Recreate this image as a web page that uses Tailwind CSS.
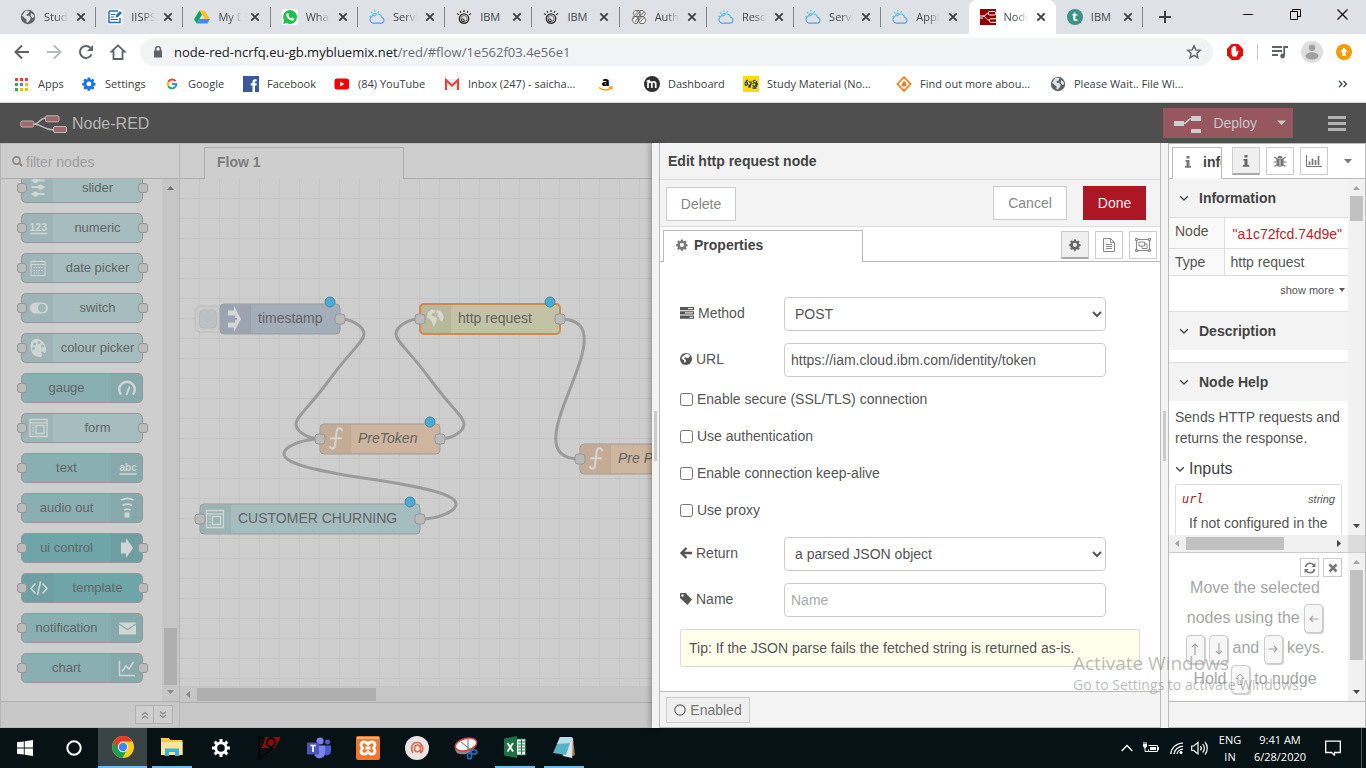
<!DOCTYPE html>
<html lang="en">
<head>
<meta charset="utf-8">
<title>Node-RED : node-red-ncrfq.eu-gb.mybluemix.net</title>
<script src="https://cdn.jsdelivr.net/npm/@tailwindcss/browser@4"></script>
</head>
<body class="flex h-screen flex-col overflow-hidden bg-white font-['Liberation_Sans',Arial,sans-serif] text-[14px] leading-5 text-[#555]">

<svg class="absolute size-0" aria-hidden="true">
  <defs>
    <linearGradient id="cloudGrad" x1="0" y1="0" x2="0" y2="16" gradientUnits="userSpaceOnUse"><stop offset="0" stop-color="#63dcd8"/><stop offset="1" stop-color="#5b8ff0"/></linearGradient>
    <symbol id="i-close" viewBox="0 0 10 10"><path d="M1.300 1.300 8.700 8.700M8.700 1.300 1.300 8.700" stroke="#3c4043" stroke-width="1.800" fill="none"/></symbol>
    <symbol id="i-cloud" viewBox="0 0 16 16"><path d="M4 14.200h8.200a3 3 0 0 0 .5-5.900 3.800 3.800 0 0 0-6.900-1.600A3.600 3.600 0 0 0 4 14.200zM3.600 6.600A2.700 2.700 0 0 1 7 4.400M1 7.400l1 .2M2.200 3.200l.9.9M5.800 1v1.300M9.600 2.400 8.900 3.500" fill="none" stroke="url(#cloudGrad)" stroke-width="1.200" stroke-linecap="round"/></symbol>
    <symbol id="i-watson" viewBox="0 0 16 16"><circle cx="8" cy="9.600" r="4.700" fill="none" stroke="#333" stroke-width="1.400"/><circle cx="8" cy="9.600" r="3.100" fill="none" stroke="#555" stroke-width=".8"/><circle cx="6.800" cy="11.300" r="1.400" fill="none" stroke="#222"/><path d="M8 1v2M4 2l1 1.800M12 2l-1 1.800M1 4.600l1.900 1.200M15 4.600l-1.900 1.200" stroke="#333" stroke-width="1.200"/></symbol>
    <symbol id="i-globe" viewBox="0 0 16 16"><circle cx="8" cy="8" r="7.200" fill="#5f6368"/><path d="M5.500 1.500 9.500 2 8.600 4.400 6.500 5.200 6.800 6.800H9l1.600 1.700-.4 2.200-2.400 2.800-1.400-.4.2-2.600-2.400-1.700L3 7.300 1.900 7zM11 4l2.600 1.800.6 2-1.400 1.500L10.700 7z" fill="#dfe2e6"/></symbol>
    <symbol id="i-gear" viewBox="0 0 16 16"><path fill-rule="evenodd" fill="currentColor" d="M6.600 1h2.800l.4 2 1.100.5 1.700-1.200 2 2-1.200 1.700.5 1.100 2 .4v2.800l-2 .4-.5 1.100 1.200 1.700-2 2-1.700-1.200-1.100.5-.4 2H6.600l-.4-2-1.100-.5-1.700 1.200-2-2 1.200-1.700-.5-1.100-2-.4V7.400l2-.4.5-1.100L1.400 4.200l2-2 1.700 1.200L6.200 3zM8 5.600a2.900 2.900 0 1 0 0 5.800 2.900 2.900 0 0 0 0-5.800z" transform="translate(.2 -.3) scale(.96)"/></symbol>
    <symbol id="i-chev" viewBox="0 0 10 10"><path d="M1.200 3.200 5 7l3.800-3.800" fill="none" stroke="currentColor" stroke-width="1.300"/></symbol>
    <symbol id="i-form" viewBox="0 0 20 20"><path d="M1.500 1.500h17v17h-17zM1.500 4.800h17M7.500 7.500h8v8h-8z" fill="none" stroke="#d0d5d5" stroke-width="1.300"/><path d="M3.500 7h2.500M3.500 10h2.500M3.500 13h2.500M3.500 16h2.500" stroke="#d0d5d5" stroke-width="1.200"/></symbol>
    <symbol id="i-func" viewBox="0 0 16 26"><path d="M14 4.200c-.6-2.800-4.700-2.700-5.300.8L7 19.500c-.6 3.800-4.600 3.900-5 1.300M3 12.200h10" fill="none" stroke="#d6d4d2" stroke-width="2.100" stroke-linecap="round"/></symbol>
    <pattern id="grid" width="20" height="20" patternUnits="userSpaceOnUse"><path d="M19.500 0V20M0 19.500H20" stroke="#c5c5c5" fill="none"/></pattern>
  </defs>
</svg>

<!-- Browser tab strip -->
<header class="flex h-[34px] shrink-0 items-stretch bg-[#dee1e6] font-['Segoe_UI','Open_Sans',sans-serif] text-[11px] leading-4 text-[#46494d]">
  <nav class="ml-[9px] flex w-[1134px] items-stretch" aria-label="Tabs">
    <div class="flex flex-1 items-center pl-[11px]"><svg class="size-4 shrink-0"><use href="#i-globe"/></svg><span class="ml-2 w-6 overflow-hidden whitespace-nowrap [mask-image:linear-gradient(to_right,#000_50%,transparent)]">Stud</span><button class="ml-2" aria-label="Close"><svg class="size-[10px]"><use href="#i-close"/></svg></button><i class="ml-auto h-5 w-px bg-[#80868b]"></i></div>
    <div class="flex flex-1 items-center pl-[11px]"><svg class="size-4 shrink-0" viewBox="0 0 16 16"><rect x=".5" y=".5" width="15" height="15" rx="1" fill="#fff"/><path d="M11 2H3a1 1 0 0 0-1 1v10.500h11V9" fill="none" stroke="#2a6db5" stroke-width="1.500"/><path d="M4 5.500h4M4 8h3M4 10.500h7" stroke="#2a6db5"/><path d="m8.500 8.500.5-2.500L13 2l2 2-4 4z" fill="#2a6db5"/></svg><span class="ml-2 w-6 overflow-hidden whitespace-nowrap [mask-image:linear-gradient(to_right,#000_50%,transparent)]">IISPS</span><button class="ml-2" aria-label="Close"><svg class="size-[10px]"><use href="#i-close"/></svg></button><i class="ml-auto h-5 w-px bg-[#80868b]"></i></div>
    <div class="flex flex-1 items-center pl-[11px]"><svg class="size-4 shrink-0" viewBox="0 0 16 16"><path d="M5.500 1.500h5L16 10h-5.200z" fill="#fbc22d"/><path d="M5.500 1.500 8 5.800 2.700 14.500 0 10.200z" fill="#11a25e"/><path d="M5.500 10H16l-2.700 4.500H2.700z" fill="#4687f3"/></svg><span class="ml-2 w-6 overflow-hidden whitespace-nowrap [mask-image:linear-gradient(to_right,#000_50%,transparent)]">My Drive</span><button class="ml-2" aria-label="Close"><svg class="size-[10px]"><use href="#i-close"/></svg></button><i class="ml-auto h-5 w-px bg-[#80868b]"></i></div>
    <div class="flex flex-1 items-center pl-[11px]"><svg class="size-4 shrink-0" viewBox="0 0 16 16"><rect width="16" height="16" rx="2" fill="#fff"/><path d="M8 1a7 7 0 0 1 0 14 7 7 0 0 1-3.300-.9L1 15l1-3.600A7 7 0 0 1 8 1z" fill="#21bf4b"/><path d="M5.300 4.300c.6-.6 1.200-.2 1.700 1.300.2.500-.6.800-.5 1.200.6 1.300 1.500 2 2.700 2.600.5.100.8-1 1.300-.8 1.500.7 1.900.9 1.600 1.700-.5 1.300-2 1.500-3.400.9C6.300 10.300 4.900 8.700 4.400 6.700c-.2-.9.2-1.900.9-2.400z" fill="#fff"/></svg><span class="ml-2 w-6 overflow-hidden whitespace-nowrap [mask-image:linear-gradient(to_right,#000_50%,transparent)]">WhatsApp</span><button class="ml-2" aria-label="Close"><svg class="size-[10px]"><use href="#i-close"/></svg></button><i class="ml-auto h-5 w-px bg-[#80868b]"></i></div>
    <div class="flex flex-1 items-center pl-[11px]"><svg class="size-4 shrink-0"><use href="#i-cloud"/></svg><span class="ml-2 w-6 overflow-hidden whitespace-nowrap [mask-image:linear-gradient(to_right,#000_50%,transparent)]">Service</span><button class="ml-2" aria-label="Close"><svg class="size-[10px]"><use href="#i-close"/></svg></button><i class="ml-auto h-5 w-px bg-[#80868b]"></i></div>
    <div class="flex flex-1 items-center pl-[11px]"><svg class="size-4 shrink-0"><use href="#i-watson"/></svg><span class="ml-2 w-6 overflow-hidden whitespace-nowrap">IBM</span><button class="ml-2" aria-label="Close"><svg class="size-[10px]"><use href="#i-close"/></svg></button><i class="ml-auto h-5 w-px bg-[#80868b]"></i></div>
    <div class="flex flex-1 items-center pl-[11px]"><svg class="size-4 shrink-0"><use href="#i-watson"/></svg><span class="ml-2 w-6 overflow-hidden whitespace-nowrap">IBM</span><button class="ml-2" aria-label="Close"><svg class="size-[10px]"><use href="#i-close"/></svg></button><i class="ml-auto h-5 w-px bg-[#80868b]"></i></div>
    <div class="flex flex-1 items-center pl-[11px]"><svg class="size-4 shrink-0" viewBox="0 0 16 16" fill="#f3f3f3" stroke="#5c6064" stroke-width=".9"><path d="M4 1.500h4l2 3-2 3H4l-2-3zM9 1.500h3l2.500 3-2 3H10l-2-3zM2.500 7.500h3l2.500 3.500-2 3.500H3.500L1 11zM8.500 7.500h4L15 11l-2 3.500H9L7 11z"/><path d="m4 6 3-4M5.500 7 9 2M10 6.500 13 3M4 13l3.500-5M9 13.500 13.500 8M2 10l2-2.500M6 14l5-7"/></svg><span class="ml-2 w-6 overflow-hidden whitespace-nowrap [mask-image:linear-gradient(to_right,#000_50%,transparent)]">Authen</span><button class="ml-2" aria-label="Close"><svg class="size-[10px]"><use href="#i-close"/></svg></button><i class="ml-auto h-5 w-px bg-[#80868b]"></i></div>
    <div class="flex flex-1 items-center pl-[11px]"><svg class="size-4 shrink-0"><use href="#i-cloud"/></svg><span class="ml-2 w-6 overflow-hidden whitespace-nowrap [mask-image:linear-gradient(to_right,#000_50%,transparent)]">Resource</span><button class="ml-2" aria-label="Close"><svg class="size-[10px]"><use href="#i-close"/></svg></button><i class="ml-auto h-5 w-px bg-[#80868b]"></i></div>
    <div class="flex flex-1 items-center pl-[11px]"><svg class="size-4 shrink-0"><use href="#i-cloud"/></svg><span class="ml-2 w-6 overflow-hidden whitespace-nowrap [mask-image:linear-gradient(to_right,#000_50%,transparent)]">Service</span><button class="ml-2" aria-label="Close"><svg class="size-[10px]"><use href="#i-close"/></svg></button><i class="ml-auto h-5 w-px bg-[#80868b]"></i></div>
    <div class="flex flex-1 items-center pl-[11px]"><svg class="size-4 shrink-0"><use href="#i-cloud"/></svg><span class="ml-2 w-6 overflow-hidden whitespace-nowrap [mask-image:linear-gradient(to_right,#000_50%,transparent)]">Application</span><button class="ml-2" aria-label="Close"><svg class="size-[10px]"><use href="#i-close"/></svg></button></div>
    <div class="flex flex-1 items-center rounded-t-lg bg-white pl-[11px]"><svg class="size-4 shrink-0" viewBox="0 0 16 16"><rect width="16" height="16" fill="#8f0000"/><path d="M0 7h3c3 0 3-3 6-3M3 7c3 0 3 4.500 7 4.500M0 9h3" stroke="#fff" fill="none"/><rect x="8.500" y="2.500" width="7" height="3.500" rx="1" fill="#8f0000" stroke="#fff"/><rect x="9.500" y="9.800" width="8" height="3.500" rx="1" fill="#8f0000" stroke="#fff"/></svg><span class="ml-2 w-6 overflow-hidden whitespace-nowrap [mask-image:linear-gradient(to_right,#000_50%,transparent)]">Node-RED</span><button class="ml-2" aria-label="Close"><svg class="size-[10px]"><use href="#i-close"/></svg></button></div>
    <div class="flex flex-1 items-center pl-[11px]"><b class="flex size-4 shrink-0 items-center justify-center rounded-full bg-[#3d9287] pb-0.5 text-[13px] leading-4 text-white">t</b><span class="ml-2 w-6 overflow-hidden whitespace-nowrap">IBM</span><button class="ml-2" aria-label="Close"><svg class="size-[10px]"><use href="#i-close"/></svg></button><i class="ml-auto h-5 w-px bg-[#80868b]"></i></div>
  </nav>
  <button class="ml-4" aria-label="New tab"><svg class="size-3" viewBox="0 0 12 12"><path d="M6 0v12M0 6h12" stroke="#3c4043" stroke-width="2"/></svg></button>
  <div class="ml-auto flex items-start gap-9 pt-[9px] pr-[18px] text-black">
    <button aria-label="Minimize"><svg class="size-[11px]" viewBox="0 0 11 11"><path d="M0 5.500h10" stroke="currentColor"/></svg></button>
    <button aria-label="Restore"><svg class="size-[11px]" viewBox="0 0 11 11"><path d="M.5 2.500h7v8h-7zM2.500 2.500v-2h8v7h-3" fill="none" stroke="currentColor"/></svg></button>
    <button aria-label="Close window"><svg class="size-[11px]" viewBox="0 0 11 11"><path d="m.5.5 10 10M10.500.5l-10 10" stroke="currentColor" stroke-width="1.200"/></svg></button>
  </div>
</header>

<!-- Address bar -->
<div class="flex h-9 shrink-0 items-center pr-3.5 pl-3.5 font-['Segoe_UI','Open_Sans',sans-serif]">
  <div class="flex w-[126px] shrink-0 items-center gap-4 text-[#5f6368]">
    <button aria-label="Back"><svg class="size-4" viewBox="0 0 16 16"><path d="M15 8H2M8 1.500 1.500 8 8 14.500" fill="none" stroke="currentColor" stroke-width="2"/></svg></button>
    <button aria-label="Forward" class="text-[#b8babd]"><svg class="size-4" viewBox="0 0 16 16"><path d="M1 8h13M8 1.500 14.500 8 8 14.500" fill="none" stroke="currentColor" stroke-width="2"/></svg></button>
    <button aria-label="Reload"><svg class="size-4" viewBox="0 0 16 16"><path d="M13.500 10.300A6 6 0 1 1 12.300 3.800" fill="none" stroke="currentColor" stroke-width="2"/><path d="M15 1v6H9z" fill="currentColor"/></svg></button>
    <button aria-label="Home"><svg class="size-4" viewBox="0 0 16 16"><path d="M8 1.400 1.500 7.500H3.500V15h9V7.500h2z" fill="none" stroke="currentColor" stroke-width="1.800"/></svg></button>
  </div>
  <div class="flex h-7 grow items-center rounded-full bg-[#f1f3f4] pr-[11px] pl-3.5">
    <svg class="mr-3 h-3 w-2 shrink-0" viewBox="0 0 8 12"><path d="M0 4.500h8V11.500H0z" fill="#5f6368"/><path d="M1.700 5V2.800a2.300 2.300 0 0 1 4.600 0V5" fill="none" stroke="#5f6368" stroke-width="1.400"/></svg>
    <div class="grow text-[13px] text-[#202124]">node-red-ncrfq.eu-gb.mybluemix.net<span class="text-[#6a6e73]">/red/#flow/1e562f03.4e56e1</span></div>
    <button aria-label="Bookmark"><svg class="size-4" viewBox="0 0 16 16"><path d="m8 1.800 1.800 4.100 4.500.4-3.400 3 1 4.400L8 11.400l-3.900 2.300 1-4.400-3.400-3 4.500-.4z" fill="none" stroke="#5f6368" stroke-width="1.400"/></svg></button>
  </div>
  <button class="ml-3.5" aria-label="AdBlock"><svg class="size-4" viewBox="0 0 16 16"><path d="M4.700 0h6.600L16 4.700v6.600L11.300 16H4.700L0 11.300V4.700z" fill="#e40d0d"/><path d="M4.500 8V4.200c0-.8 1-.8 1 0V3c0-.9 1.200-.9 1.200 0v-.6c0-.9 1.300-.9 1.300 0V3c0-.9 1.200-.9 1.200 0v5l1.300-1.200c.7-.5 1.500.2 1 1L9.700 12.500H5.800C4.900 11.500 4.500 10 4.500 8z" fill="#fff"/></svg></button>
  <i class="ml-3.5 h-4 w-px bg-[#c8cacd]"></i>
  <button class="ml-3.5" aria-label="Media"><svg class="h-3.5 w-4" viewBox="0 0 16 14"><path d="M0 2h10M0 6h10M0 10h6" stroke="#5f6368" stroke-width="1.800"/><path d="M12.200 11V2H16" fill="none" stroke="#5f6368" stroke-width="1.800"/><circle cx="10.600" cy="11" r="2.400" fill="#5f6368"/></svg></button>
  <button class="ml-[13px]" aria-label="Profile"><svg class="size-[22px]" viewBox="0 0 22 22"><circle cx="11" cy="11" r="11" fill="#dedede"/><circle cx="11" cy="6.800" r="3.300" fill="#a0a0a0"/><ellipse cx="11" cy="15" rx="6.500" ry="3.700" fill="#a0a0a0"/></svg></button>
  <button class="ml-[13px]" aria-label="Update"><svg class="size-4" viewBox="0 0 16 16"><circle cx="8" cy="8" r="8" fill="#f49b00"/><path d="M8 3.500 12 8H9.700v4H6.300V8H4z" fill="#fff"/></svg></button>
</div>

<!-- Bookmarks -->
<nav class="flex h-[33px] shrink-0 items-center border-b border-[#d5d6d8] pb-1 pl-3.5 font-['Segoe_UI','Open_Sans',sans-serif] text-[11px] leading-4 whitespace-nowrap text-[#3c4043]" aria-label="Bookmarks">
  <a href="#" class="flex w-[67px] items-center gap-2"><svg class="size-4" viewBox="0 0 16 16"><path d="M1 2h3v3H1zM6 2h3v3H6zM11 2h3v3h-3z" fill="#ea4335"/><path d="M1 7h3v3H1zM1 12h3v3H1z" fill="#34a853"/><path d="M6 7h3v3H6z" fill="#4285f4"/><path d="M11 7h3v3h-3zM6 12h3v3H6zM11 12h3v3h-3z" fill="#fbb80a"/></svg>Apps</a>
  <a href="#" class="flex w-[83px] items-center gap-2"><svg class="size-4 text-[#1a73e8]"><use href="#i-gear" x="1" y="1" width="14" height="14"/></svg>Settings</a>
  <a href="#" class="flex w-[79px] items-center gap-2"><svg class="size-4" viewBox="0 0 16 16" fill="none" stroke-width="2"><path d="M11.500 5.200A4.200 4.200 0 0 0 4.300 6" stroke="#ea4335"/><path d="M4.300 6a4.200 4.200 0 0 0 0 4" stroke="#fbbc05"/><path d="M4.300 10a4.200 4.200 0 0 0 6.700 1.200" stroke="#34a853"/><path d="M11 11.200A4 4 0 0 0 12.200 8H8" stroke="#4285f4"/></svg>Google</a>
  <a href="#" class="flex w-[91px] items-center gap-2"><svg class="size-4" viewBox="0 0 16 16"><rect width="16" height="16" fill="#3a589b"/><path d="M13.500 3.200h-1.300c-2 0-2.700 1-2.700 2.600v1.400H7.700v2.300h1.800V16h2.500V9.500h1.500l.3-2.300H12V6c0-.5.300-.7.800-.7h.9z" fill="#fff"/></svg>Facebook</a>
  <a href="#" class="flex w-[110px] items-center gap-2"><svg class="size-4" viewBox="0 0 16 16"><rect x=".5" y="2.500" width="14.500" height="11" rx="2.500" fill="#f60000"/><path d="m6.200 5.500 4 2.500-4 2.500z" fill="#fff"/></svg>(84) YouTube</a>
  <a href="#" class="flex w-[154px] items-center gap-2"><svg class="size-4" viewBox="0 0 16 16"><rect x="1" y="3" width="14" height="11" fill="#eee"/><path d="M2 14V4l6 5.500L14 4v10" fill="none" stroke="#d84b3e" stroke-width="2.200"/></svg>Inbox (247) - saicha...</a>
  <a href="#" class="flex w-[46px] items-center" aria-label="Amazon"><svg class="size-4" viewBox="0 0 16 16"><text x="3.500" y="9.500" font-family="Open Sans" font-weight="800" font-size="13" fill="#000">a</text><path d="M1 11.500c4 3 8.500 3 12 .4M11 11.300l3-.3-.4 2.600" fill="none" stroke="#f90" stroke-width="1.400"/></svg></a>
  <a href="#" class="flex w-[99px] items-center gap-2"><svg class="size-4" viewBox="0 0 16 16"><circle cx="8" cy="8" r="8" fill="#303030"/><path d="M4 12V7.500c0-2.300 3.800-2.300 3.800 0V12M7.800 7.500c0-2.300 3.900-2.300 3.900 0V12M2.500 5.500 6 4.300" fill="none" stroke="#fff" stroke-width="1.700"/></svg>Dashboard</a>
  <a href="#" class="flex w-[153px] items-center gap-2"><svg class="size-4" viewBox="0 0 16 16"><rect width="16" height="16" fill="#fddc0a"/><path d="M2 7.500c0-2 2.500-2 2.500 0s-2 2.500-2.500.5M3 5l2-1M6 6c2-1 2.500 0 2 2s-2 2-2 .3M9.500 5.500l3-1.500M10 8c0-2 3-2 3 .5s-3 2.500-3 .3M13.500 5v6M9.500 12h4M5 10.800h3M13 8h2" stroke="#1d3a66" stroke-width="1.300" fill="none"/></svg>Study Material (No...</a>
  <a href="#" class="flex w-[154px] items-center gap-2"><svg class="size-4" viewBox="0 0 16 16" fill="none" stroke="#f48024" stroke-width="1.800"><path d="M6.500 2.500 1.400 8l5.100 5.500M9.500 2.500 14.600 8l-5.100 5.500M6.500 2.500 8 1.200l1.500 1.300M6.500 13.500 8 14.800l1.500-1.300"/><path d="M8 4.500c2 2.200 3 3 2.600 4.600-.5 2.200-4.700 2.200-5.200 0C5.200 7.600 7 7 8 4.500z" fill="#f48024" stroke="none"/></svg>Find out more abou...</a>
  <a href="#" class="flex items-center gap-2"><svg class="size-4"><use href="#i-globe"/></svg>Please Wait.. File Wi...</a>
  <button class="mr-[18px] ml-auto" aria-label="More bookmarks"><svg class="size-2.5" viewBox="0 0 10 10"><path d="m1 2 3 3-3 3M5.500 2l3 3-3 3" fill="none" stroke="#3c4043" stroke-width="1.300"/></svg></button>
</nav>

<!-- Node-RED header -->
<div class="flex h-10 shrink-0 items-center bg-[#4f4f4f] pl-5 text-[#b5b5b5]">
  <svg class="mt-1 h-5 w-12" viewBox="0 0 48 20"><path d="M14 9c6 0 5-6 12-6M14 9c8 0 9 6 20 6" fill="none" stroke="#b9b9b9" stroke-width="1.600"/><g fill="#a0686c" stroke="#b9b9b9"><rect x=".8" y="6" width="13" height="6" rx="1.500"/><rect x="25.500" y=".8" width="13.500" height="6" rx="1.500"/><rect x="33.500" y="11.500" width="13" height="6" rx="1.500"/></g></svg>
  <span class="mt-0.5 ml-1 text-[16px] leading-6">Node-RED</span>
  <div class="ml-auto flex h-[30px] items-center bg-[#96575f] text-[14px] text-[#c8c8c8]">
    <button class="flex h-full items-center pr-3 pl-2.5"><svg class="mr-3 h-5 w-7" viewBox="0 0 28 20"><path d="M1 8h10v5H1zM18 3h10v5H18zM18 16h10v5H18z" fill="#cfcfcf"/><path d="M10 10.500c5 0 4-5 9-5" fill="none" stroke="#cfcfcf" stroke-width="1.500"/></svg>Deploy</button>
    <button class="pr-1.5 pl-2" aria-label="Deploy options"><svg class="h-1.5 w-[10px]" viewBox="0 0 10 6"><path d="M0 .5h9L4.500 5z" fill="#c8c8c8"/></svg></button>
  </div>
  <button class="mr-5 ml-[35px] flex flex-col gap-[3px]" aria-label="Menu"><i class="h-[3px] w-[18px] bg-[#b2b2b2]"></i><i class="h-[3px] w-[18px] bg-[#b2b2b2]"></i><i class="h-[3px] w-[18px] bg-[#b2b2b2]"></i></button>
</div>

<main class="flex min-h-0 flex-1">
  <!-- Palette -->
  <aside class="flex w-[180px] shrink-0 flex-col border border-y-[#bababa] border-r-[#b4b4b4] border-l-[#b4b4b4] bg-[#cecece]">
    <label class="flex h-[35px] shrink-0 items-center border-b border-[#aeaeae] pt-0.5 pl-[11px]"><svg class="size-3" viewBox="0 0 12 12"><circle cx="4.500" cy="4.500" r="3.600" fill="none" stroke="#8b8b8b" stroke-width="1.700"/><path d="m7.200 7.200 3 3" stroke="#8b8b8b" stroke-width="2.200"/></svg><input type="text" placeholder="filter nodes" aria-label="filter nodes" class="ml-[2px] w-36 bg-transparent text-[14px] outline-none placeholder:text-[#9d9d9d]"></label>
    <div class="flex min-h-0 flex-1">
      <ul class="flex grow flex-col gap-2.5 overflow-hidden pl-5 text-center text-[13px] leading-7 text-[#636566] [&>li]:relative [&>li]:flex [&>li]:h-[30px] [&>li]:w-[122px] [&>li]:shrink-0 [&>li]:rounded-[5px] [&>li]:border [&>li]:border-[#979797] [&>li:first-child]:-mt-1.5 [&>li>span]:grow [&>li>svg]:h-7 [&>li>svg]:w-[31px] [&>li>svg]:bg-[#7b8787]/15 [&>li>i]:absolute [&>li>i]:top-[9px] [&>li>i]:size-[10px] [&>li>i]:rounded-[3px] [&>li>i]:border [&>li>i]:border-[#969696] [&>li>i]:bg-[#bbb]">
        <li class="bg-[#a5bdbf]"><svg viewBox="0 0 30 28"><path d="M9 6.500h13M9 13h13M9 20h13" stroke="#d0d5d5" stroke-width="2"/><circle cx="13" cy="6.500" r="2.600" fill="#d0d5d5"/><circle cx="18" cy="13" r="2.600" fill="#d0d5d5"/><circle cx="13" cy="20" r="2.600" fill="#d0d5d5"/></svg><span>slider</span><i class="-left-[5px]"></i><i class="-right-[6px]"></i></li>
        <li class="bg-[#a5bdbf]"><svg viewBox="0 0 30 28"><text x="7" y="17" font-family="Liberation Sans" font-weight="700" font-size="10.500" fill="#d0d5d5">123</text><path d="M8 19.500h17" stroke="#d0d5d5" stroke-width="1.500"/></svg><span>numeric</span><i class="-left-[5px]"></i><i class="-right-[6px]"></i></li>
        <li class="bg-[#a5bdbf]"><svg viewBox="0 0 30 28" fill="none" stroke="#d0d5d5"><path d="M8.500 7.500h14v14h-14zM8.500 10.500h14M11.500 5.500v3M19.500 5.500v3"/><path d="M11 13.500h9M11 16.500h9M11 19h6" stroke-dasharray="1.500 1"/></svg><span>date picker</span><i class="-left-[5px]"></i><i class="-right-[6px]"></i></li>
        <li class="bg-[#a5bdbf]"><svg viewBox="0 0 30 28"><rect x="7.500" y="8.500" width="18" height="11" rx="5.500" fill="#d0d5d5"/><circle cx="19.500" cy="14" r="4.200" fill="#a2b7b9"/></svg><span>switch</span><i class="-left-[5px]"></i><i class="-right-[6px]"></i></li>
        <li class="bg-[#a5bdbf]"><svg viewBox="0 0 30 28"><path d="M13 5c6-1 11 5 10.500 12.500-.5 2-2 1.500-2.500.5-.8-1.500-2.500-1-2 1 .7 2 1 4-1.500 4C10 23 8 17 8 12.500 8 8 10 5.500 13 5z" fill="#d0d5d5"/><g fill="#9fb4b5"><circle cx="12" cy="10" r="1.500"/><circle cx="16.500" cy="8.500" r="1.500"/><circle cx="11" cy="14.500" r="1.500"/><circle cx="20" cy="12" r="1.500"/></g></svg><span>colour picker</span><i class="-left-[5px]"></i><i class="-right-[6px]"></i></li>
        <li class="bg-[#8aafb2]"><span>gauge</span><svg viewBox="0 0 30 28"><path d="M9.500 20.500a7.800 7.800 0 1 1 12 0" fill="none" stroke="#d0d5d5" stroke-width="2.400"/><path d="m15 21 3-8.500" stroke="#d0d5d5" stroke-width="2"/></svg><i class="-left-[5px]"></i></li>
        <li class="bg-[#a5bdbf]"><svg viewBox="0 0 30 28"><use href="#i-form" x="6" y="4" width="20" height="20"/></svg><span>form</span><i class="-left-[5px]"></i><i class="-right-[6px]"></i></li>
        <li class="bg-[#8aafb2]"><span>text</span><svg viewBox="0 0 30 28"><text x="8" y="17" font-family="Liberation Sans" font-weight="700" font-size="10" fill="#d0d5d5">abc</text><path d="M8 20h17" stroke="#d0d5d5" stroke-width="1.600"/></svg><i class="-left-[5px]"></i></li>
        <li class="bg-[#8aafb2]"><span>audio out</span><svg viewBox="0 0 30 28"><path d="M9.500 6c4-2 9-2 12.500 0M11 11.500c3-1.500 7-1.500 9.500 0M12.500 16c2-1 4.500-1 6.500 0" fill="none" stroke="#d0d5d5" stroke-width="1.800"/><path d="M13 18.500h5v5h-5z" fill="#d0d5d5"/></svg><i class="-left-[5px]"></i></li>
        <li class="bg-[#6fa4a8]"><span>ui control</span><svg viewBox="0 0 30 28"><path d="M9.500 8.500h5V4l7 10-7 10v-4.500h-5z" fill="#d0d5d5"/></svg><i class="-left-[5px]"></i><i class="-right-[6px]"></i></li>
        <li class="bg-[#6fa4a8]"><svg viewBox="0 0 30 28"><path d="m13 9.500-4.500 5 4.500 5M20 9.500l4.500 5-4.500 5M18 7.500 15 21" fill="none" stroke="#d0d5d5" stroke-width="1.600"/></svg><span>template</span><i class="-left-[5px]"></i><i class="-right-[6px]"></i></li>
        <li class="bg-[#8aafb2]"><span>notification</span><svg viewBox="0 0 30 28"><path d="M7.500 8.500h17v12h-17z" fill="#d0d5d5"/><path d="m7.500 10 8.500 5.500 8.500-5.500" fill="none" stroke="#8aa9ab" stroke-width="1.200"/></svg><i class="-left-[5px]"></i></li>
        <li class="bg-[#8aafb2]"><span>chart</span><svg viewBox="0 0 30 28"><path d="M8 6.500V21.500h15.500M10.500 17.500l4-5.500 3 3 4.500-7" fill="none" stroke="#d0d5d5" stroke-width="1.500"/></svg><i class="-left-[5px]"></i><i class="-right-[6px]"></i></li>
      </ul>
      <div class="flex w-[17px] shrink-0 flex-col items-center bg-[#c6c6c6] pt-[7px] pb-1.5"><svg class="h-[5px] w-[7px]" viewBox="0 0 7 5"><path d="M3.500 0 7 4H0z" fill="#707070"/></svg><div class="mt-auto mb-[5px] h-[57px] w-[13px] bg-[#afafaf]"></div><svg class="h-[5px] w-[7px]" viewBox="0 0 7 5"><path d="M0 0h7L3.500 4z" fill="#8a8a8a"/></svg></div>
    </div>
    <div class="flex h-[26px] shrink-0 items-center justify-end border-t border-[#aeaeae] bg-[#c8c8c8] pr-1.5 text-[#8a8a8a]">
      <button aria-label="Collapse all" class="flex size-[19px] items-center justify-center border border-[#b0b0b0] bg-[#cecece]"><svg class="size-2.5" viewBox="0 0 10 10"><path d="m2 5 3-2.500L8 5M2 8.500 5 6l3 2.500" fill="none" stroke="currentColor" stroke-width="1.200"/></svg></button>
      <button aria-label="Expand all" class="flex size-[19px] items-center justify-center border border-l-0 border-[#b0b0b0] bg-[#cecece]"><svg class="size-2.5" viewBox="0 0 10 10"><path d="m2 1.500 3 2.500 3-2.500M2 5l3 2.500L8 5" fill="none" stroke="currentColor" stroke-width="1.200"/></svg></button>
    </div>
  </aside>

  <!-- Workspace -->
  <section class="flex min-w-0 flex-1 flex-col border-t border-[#bababa] bg-[#cecece]">
    <div class="flex h-[35px] shrink-0 border-b border-[#aeaeae] pt-[3px] pl-6"><a href="#" class="-mb-px h-8 w-[200px] border border-b-0 border-[#aeaeae] bg-[#cecece] pt-1 pl-3 text-[14px] font-bold text-[#7d7d7d]">Flow 1</a></div>
    <svg class="min-h-0 w-full flex-1 font-['Liberation_Sans',Arial,sans-serif] text-[14px]">
      <rect width="100%" height="100%" fill="url(#grid)"/>
      <g transform="translate(-180 -179)">
        <g fill="none" stroke="#9b9b9b" stroke-width="3">
          <path d="M340 319C352 319 364 326.500 364 334S352 349 330 379S296 416.500 296 424S308 439 320 439"/>
          <path d="M440 439C452 439 464 431.500 464 424S452 409 430 379S396 341.500 396 334S408 319 420 319"/>
          <path d="M560 319C635 319 505 459 580 459"/>
          <path d="M420 519C438 519 456 511.500 456 504S438 489 370 479S284 461.500 284 454S302 439 320 439"/>
        </g>
        <rect x="195" y="306" width="32" height="26" rx="5" fill="#cbcbcb" stroke="#bcbcbc"/><rect x="199.500" y="310" width="17" height="18" rx="4" fill="#bcc1c6" stroke="#b3b8bd"/>
        <g stroke="#9b9b9b">
          <rect x="220" y="304" width="120" height="30" rx="4" fill="#a4adba"/>
          <rect x="420" y="304" width="140" height="30" rx="4" fill="#c2c3a5" stroke="#d2884f" stroke-width="2"/>
          <rect x="320" y="424" width="120" height="30" rx="4" fill="#ceb59f"/>
          <rect x="580" y="444" width="120" height="30" rx="4" fill="#ceb59f"/>
          <rect x="200" y="504" width="220" height="30" rx="4" fill="#a5bdbf"/>
        </g>
        <path d="M221 305h29v28h-29zM421 305h29v28h-29zM321 425h29v28h-29zM581 445h29v28h-29zM201 505h29v28h-29z" fill="#000" fill-opacity=".05"/>
        <path d="M250.500 304.500v29M450.500 305v28M350.500 424.500v29M610.500 444.500v29M230.500 504.500v29" stroke="#000" stroke-opacity=".07"/>
        <path d="M228 310.500h6v-4.500l7 13-7 13v-4.500h-6v-5h7v-7h-7z" fill="#d4d6d8"/><path d="M228 319h9" stroke="#9ca5b1" stroke-width="2"/>
        <path d="M428 312l4-2.500 3.500.5-.5 2.500-3 1-.5 2 3 1 2.500 2-1 4-2.500 4.500-1.500-5-2-2.500-3-2zM437 310c4 0 7 4 6.500 8l-1 3.500-2.500-1-1-3-2-1.500 1-2.500-2-1z" fill="#d6d7cd"/>
        <use href="#i-func" x="328" y="426" width="16" height="26"/><use href="#i-func" x="588" y="446" width="16" height="26"/>
        <use href="#i-form" x="205" y="509" width="20" height="20"/>
        <g fill="#bababa" stroke="#979797"><rect x="335" y="314" width="10" height="10" rx="3"/><rect x="415" y="314" width="10" height="10" rx="3"/><rect x="555" y="314" width="10" height="10" rx="3"/><rect x="315" y="434" width="10" height="10" rx="3"/><rect x="435" y="434" width="10" height="10" rx="3"/><rect x="575" y="454" width="10" height="10" rx="3"/><rect x="195" y="514" width="10" height="10" rx="3"/><rect x="415" y="514" width="10" height="10" rx="3"/></g>
        <g fill="#4eaad0" stroke="#418ba9"><circle cx="330" cy="302" r="5"/><circle cx="550" cy="302" r="5"/><circle cx="430" cy="422" r="5"/><circle cx="410" cy="502" r="5"/></g>
        <g fill="#646464"><text x="258" y="323">timestamp</text><text x="458" y="323">http request</text><text x="358" y="443" font-style="italic">PreToken</text><text x="618" y="463" font-style="italic">Pre Prediction</text><text x="238" y="523">CUSTOMER CHURNING</text></g>
      </g>
    </svg>
    <div class="flex h-4 shrink-0 items-center bg-[#c6c6c6] pl-1.5"><svg class="h-[7px] w-[5px]" viewBox="0 0 5 7"><path d="M4 0v7L0 3.500z" fill="#8a8a8a"/></svg><div class="ml-1.5 h-[13px] w-[179px] bg-[#afafaf]"></div></div>
    <div class="h-[26px] shrink-0 border-y border-t-[#aeaeae] border-b-[#b8b8b8] bg-[#c8c8c8]"></div>
  </section>

  <!-- Edit tray -->
  <div class="relative flex w-2 shrink-0 items-center border-r border-[#bbb] bg-[#f3f3f3] shadow-[-1px_0_6px_rgba(0,0,0,.35)]"><i class="ml-0.5 h-[50px] w-[3px] bg-[#ccc]"></i></div>
  <section class="relative flex w-[501px] shrink-0 flex-col border-r border-b border-[#bbb] bg-white">
    <h1 class="h-[37px] shrink-0 border-b border-[#ddd] bg-[#f3f3f3] pt-2 pl-2 text-[14px] leading-5 font-bold text-[#444]">Edit http request node</h1>
    <div class="flex h-[47px] shrink-0 items-center border-b border-[#ddd] bg-[#f3f3f3] pr-3.5 pl-1.5">
      <button class="mt-px h-[34px] w-[70px] border border-[#ccc] bg-white text-[#888]">Delete</button>
      <button class="ml-auto h-[34px] w-[74px] border border-[#ccc] bg-white text-[#888]">Cancel</button>
      <button class="ml-4 h-[34px] w-[63px] bg-[#ad1625] text-[#eee]">Done</button>
    </div>
    <div class="flex h-[35px] shrink-0 items-stretch pt-[3px]">
      <i class="w-[3px] border-b border-[#bbb]"></i>
      <a href="#" class="flex w-[200px] items-center gap-1.5 border border-b-0 border-[#bbb] pb-[3px] pl-3 font-bold text-[#444]"><svg class="size-3 text-[#777]"><use href="#i-gear" width="12" height="12"/></svg>Properties</a>
      <div class="flex grow gap-1.5 border-b border-[#bbb] pt-px pr-[3px] [&>button]:flex [&>button]:size-7 [&>button]:items-center [&>button]:justify-center [&>button]:border [&>button]:border-[#ccc]">
        <button class="ml-auto border-b-2! border-b-[#aaa]! bg-[#efefef] text-[#666]" aria-label="Properties"><svg class="size-3"><use href="#i-gear" width="12" height="12"/></svg></button>
        <button aria-label="Description"><svg class="h-3.5 w-3" viewBox="0 0 12 14"><path d="M.5.5h7l4 4v9H.5zM7.500.5v4h4M3 6.500h6M3 8.500h6M3 10.500h6" fill="none" stroke="#888"/></svg></button>
        <button aria-label="Appearance"><svg class="h-3.5 w-4" viewBox="0 0 16 14" fill="none" stroke="#888"><path d="M1.500 1.500h13v11h-13zM4 4h5.500v4H4zM9.500 6H12v4.500H7V8"/><path d="M.5.5h2v2h-2zM13.500.5h2v2h-2zM.5 11.500h2v2h-2zM13.500 11.500h2v2h-2z" fill="#fff"/></svg></button>
      </div>
    </div>
    <form class="flex min-h-0 flex-1 flex-col px-5 pt-[35px]">
      <div class="mb-3 flex items-center"><label for="method" class="flex w-[104px] items-center gap-1 pb-0.5"><svg class="h-3 w-3.5" viewBox="0 0 14 12"><path d="M0 0h14v3.200H0zM0 4.300h14v3.200H0zM0 8.600h14v3.200H0z" fill="#555"/><path d="M8 1.600h5M5 5.900h8M9.500 10.200H13" stroke="#fff"/></svg>Method</label><select id="method" class="h-[34px] w-[70%] rounded border border-[#ccc] bg-white px-1.5"><option>POST</option></select></div>
      <div class="mb-3 flex items-center"><label for="url" class="flex w-[104px] items-center gap-1 pb-0.5"><svg class="size-3" viewBox="0 0 12 12"><circle cx="6" cy="6" r="6" fill="#555"/><path d="M5.500 1.200 8 1l2 1.700-1 1.700-2.500.8-1-1.200L4 5.300 5 6.500l1 .3-.2 2L4.500 10 4 7.500 1.500 5.500 2 4z" fill="#fff"/></svg>URL</label><input id="url" type="text" value="https://iam.cloud.ibm.com/identity/token" class="h-[34px] w-[70%] rounded border border-[#ccc] px-1.5"></div>
      <div class="flex h-[134px] flex-col gap-[17px]">
        <label class="flex items-center gap-1"><input type="checkbox" class="size-[13px]">Enable secure (SSL/TLS) connection</label>
        <label class="flex items-center gap-1"><input type="checkbox" class="size-[13px]">Use authentication</label>
        <label class="flex items-center gap-1"><input type="checkbox" class="size-[13px]">Enable connection keep-alive</label>
        <label class="flex items-center gap-1"><input type="checkbox" class="size-[13px]">Use proxy</label>
      </div>
      <div class="mt-3.5 mb-3 flex items-center"><label for="ret" class="flex w-[104px] items-center gap-1 pb-0.5"><svg class="size-3" viewBox="0 0 12 12"><path d="M12 6H2M6.500 1 1.500 6l5 5" fill="none" stroke="#555" stroke-width="2.400"/></svg>Return</label><select id="ret" class="h-[34px] w-[70%] rounded border border-[#ccc] bg-white px-1.5"><option>a parsed JSON object</option></select></div>
      <div class="mb-3 flex items-center"><label for="name" class="flex w-[104px] items-center gap-1 pb-0.5"><svg class="size-3" viewBox="0 0 12 12"><path fill-rule="evenodd" d="M0 1a1 1 0 0 1 1-1h4.500L12 6.500 7.500 12 0 5zM2.500 1.300a1.200 1.200 0 1 0 0 2.400 1.200 1.200 0 0 0 0-2.400z" fill="#555"/></svg>Name</label><input id="name" type="text" placeholder="Name" class="h-[34px] w-[70%] rounded border border-[#ccc] px-1.5 placeholder:text-[#aaa]"></div>
      <p class="rounded-xs border border-[#ddd] bg-[#ffffeb] p-2">Tip: If the JSON parse fails the fetched string is returned as-is.</p>
    </form>
    <div class="h-9 shrink-0 border-t border-[#bbb] bg-[#f3f3f3] pt-[5px] pl-1.5"><button class="flex h-[26px] w-[84px] items-center justify-center gap-1 border border-[#ccc] bg-[#efefef] text-[#777]"><svg class="size-3" viewBox="0 0 12 12"><circle cx="6" cy="6" r="5.200" fill="none" stroke="#666" stroke-width="1.200"/></svg>Enabled</button></div>
  </section>

  <div class="flex w-[7px] shrink-0 items-center bg-[#f3f3f3]"><i class="ml-0.5 h-[50px] w-[3px] bg-[#ccc]"></i></div>

  <!-- Sidebar -->
  <aside class="relative flex w-[198px] shrink-0 flex-col border border-[#bbb] bg-white">
    <div class="flex h-[35px] shrink-0 items-stretch">
      <div class="flex w-[3px] border-b border-[#bbb]"></div>
      <a href="#" class="mt-[3px] flex w-[50px] items-center overflow-hidden border border-b-0 border-[#bbb] pb-[3px] pl-3 font-bold text-[#444]"><svg class="mr-3 h-3 w-1.5 shrink-0" viewBox="0 0 6 12"><path d="M1.500 0h3v2.500h-3zM.5 4h4v6H6v1.800H0V10h1.500V5.800h-1z" fill="#777"/></svg><span>info</span></a>
      <div class="flex grow items-center gap-1.5 border-b border-[#bbb] pl-2.5 [&>button]:flex [&>button]:size-7 [&>button]:shrink-0 [&>button]:items-center [&>button]:justify-center [&>button]:border [&>button]:border-[#ccc]">
        <button class="border-b-2! border-b-[#aaa]! bg-[#efefef]" aria-label="info"><svg class="h-3 w-1.5" viewBox="0 0 6 12"><path d="M1.500 0h3v2.500h-3zM.5 4h4v6H6v1.800H0V10h1.500V5.800h-1z" fill="#666"/></svg></button>
        <button aria-label="debug"><svg class="size-3.5" viewBox="0 0 14 14"><path d="M3.500 4.500h7v5.500c0 3.500-7 3.500-7 0zM4.500 4c0-3 5-3 5 0z" fill="#777"/><path d="M4 5 1.500 3M10 5l2.500-2M4 8H.5M10 8h3.500M4 10.500l-2.500 2M10 10.500l2.500 2" stroke="#777" stroke-width="1.200"/><path d="M7 5.500V12" stroke="#fff" stroke-width=".8"/></svg></button>
        <button aria-label="dashboard"><svg class="h-3 w-4" viewBox="0 0 16 12"><path d="M.5 0v11.500H16" fill="none" stroke="#777"/><path d="M3.500 10V6.500M6.500 10V3.500M9.500 10V5M12.500 10V1" stroke="#777" stroke-width="1.700"/></svg></button>
        <div class="grow pr-1 text-center"><svg class="mx-auto h-[5px] w-2" viewBox="0 0 8 5"><path d="M0 0h8L4 4.500z" fill="#777"/></svg></div>
      </div>
    </div>
    <div class="flex min-h-0 flex-1">
      <div class="flex min-w-0 flex-1 flex-col">
        <div class="flex min-h-0 flex-1 flex-col overflow-hidden [&>h2]:flex [&>h2]:h-[38px] [&>h2]:shrink-0 [&>h2]:items-center [&>h2]:bg-[#f3f3f3] [&>h2]:pl-2.5 [&>h2]:font-bold [&>h2]:text-[#444]">
          <h2><svg class="mr-2.5 size-2.5"><use href="#i-chev"/></svg>Information</h2>
          <table class="w-full border-y border-[#ddd]"><tbody>
            <tr class="h-[31px] border-b border-[#ddd]"><th class="w-[55px] border-r border-[#ddd] bg-[#f9f9f9] pt-[3px] pl-1.5 text-left align-top font-normal">Node</th><td class="pt-0.5 pl-2 whitespace-nowrap text-[#b72828]">"a1c72fcd.74d9e"</td></tr>
            <tr class="h-[27px]"><th class="border-r border-[#ddd] bg-[#f9f9f9] pl-1.5 text-left font-normal">Type</th><td class="pl-1.5">http request</td></tr>
          </tbody></table>
          <a href="#" class="flex h-9 shrink-0 items-center justify-end gap-[5px] border-b border-[#ddd] pr-[3px] pb-2 text-[11px] leading-4">show more<svg class="h-1 w-1.5" viewBox="0 0 6 4"><path d="M0 0h6L3 3.800z" fill="#555"/></svg></a>
          <h2><svg class="mr-2.5 size-2.5"><use href="#i-chev"/></svg>Description</h2>
          <div class="h-[13px] shrink-0 border-b border-[#ddd]"></div>
          <h2><svg class="mr-2.5 size-2.5"><use href="#i-chev"/></svg>Node Help</h2>
          <p class="px-1.5 pt-1.5 leading-[21px]">Sends HTTP requests and returns the response.</p>
          <h3 class="mt-2 flex shrink-0 items-center px-1.5 text-[16px] leading-6 text-[#444]"><svg class="mr-1 size-2.5"><use href="#i-chev"/></svg>Inputs</h3>
          <dl class="mx-1.5 mt-[3px] h-[60px] shrink-0 rounded-xs border border-[#ddd] px-1.5 pt-1">
            <dt class="flex items-center justify-between"><code class="font-['DejaVu_Sans_Mono',monospace] text-[12px] text-[#ad1625] italic">url</code><em class="text-[11px]">string</em></dt>
            <dd class="pt-1 pl-[7px] whitespace-nowrap">If not configured in the</dd>
          </dl>
        </div>
        <div class="flex h-[17px] shrink-0 items-center bg-[#f0f0f0] px-1.5"><svg class="h-[7px] w-[5px]" viewBox="0 0 5 7"><path d="M4 0v7L0 3.500z" fill="#a3a3a3"/></svg><div class="ml-1.5 h-[13px] w-[98px] bg-[#c1c1c1]"></div><svg class="ml-auto h-[7px] w-[5px]" viewBox="0 0 5 7"><path d="M0 0v7l4-3.500z" fill="#444"/></svg></div>
      </div>
      <div class="flex w-[17px] shrink-0 flex-col items-center bg-[#f1f1f1] pt-[7px]"><svg class="h-[5px] w-[7px]" viewBox="0 0 7 5"><path d="M3.500 0 7 4H0z" fill="#a3a3a3"/></svg><div class="mt-[5px] h-[25px] w-[13px] bg-[#c1c1c1]"></div><svg class="mt-auto mb-1.5 h-[5px] w-[7px]" viewBox="0 0 7 5"><path d="M0 0h7L3.500 4z" fill="#444"/></svg><div class="h-[17px] w-full bg-[#dcdcdc]"></div></div>
    </div>
    <div class="flex h-[149px] shrink-0 border-t border-[#ccc]">
      <div class="min-w-0 flex-1 overflow-hidden">
        <div class="flex justify-end gap-1 pt-[5px] pr-1.5"><button aria-label="Next tip" class="flex size-[19px] items-center justify-center border border-[#ccc]"><svg class="size-3" viewBox="0 0 12 12"><path d="M1.500 5A4.600 4.600 0 0 1 10 3.500M10.500 7A4.600 4.600 0 0 1 2 8.500" fill="none" stroke="#777" stroke-width="1.600"/><path d="M11.500.8V5H7.300zM.5 11.200V7h4.200z" fill="#777"/></svg></button><button aria-label="Close tips" class="flex size-[19px] items-center justify-center border border-[#ccc]"><svg class="size-2.5" viewBox="0 0 10 10"><path d="m1.500 1.500 7 7M8.500 1.500l-7 7" stroke="#777" stroke-width="2.600"/></svg></button></div>
        <p class="-mt-1 pr-[7px] text-center text-[16px] leading-[30px] whitespace-nowrap text-[#a5a5a5] [&_kbd]:inline-flex [&_kbd]:h-[29px] [&_kbd]:w-[19px] [&_kbd]:items-center [&_kbd]:justify-center [&_kbd]:rounded [&_kbd]:border [&_kbd]:border-[#ccc] [&_kbd]:bg-[#f6f6f6] [&_kbd]:align-middle [&_kbd]:shadow-[1px_1px_1px_#ccc]">Move the selected<br>nodes using the <kbd><svg class="size-2.5" viewBox="0 0 10 10"><path d="M9.500 5H1M4 2 1 5l3 3" fill="none" stroke="#a5a5a5" stroke-width="1.200"/></svg></kbd><br><kbd><svg class="h-3 w-2" viewBox="0 0 8 12"><path d="M4 12V1M1 4l3-3 3 3" fill="none" stroke="#a5a5a5" stroke-width="1.200"/></svg></kbd> <kbd><svg class="h-3 w-2" viewBox="0 0 8 12"><path d="M4 0v11M1 8l3 3 3-3" fill="none" stroke="#a5a5a5" stroke-width="1.200"/></svg></kbd> and <kbd><svg class="size-2.5" viewBox="0 0 10 10"><path d="M.5 5H9M6 2l3 3-3 3" fill="none" stroke="#a5a5a5" stroke-width="1.200"/></svg></kbd> keys.<br>Hold <kbd><svg class="h-3 w-2.5" viewBox="0 0 10 12"><path d="M5 1 9 5.500H7V11.500H3V5.500H1z" fill="none" stroke="#a5a5a5"/></svg></kbd> to nudge</p>
      </div>
      <div class="flex w-[17px] shrink-0 flex-col items-center bg-[#f1f1f1] pt-[7px] pb-1.5"><svg class="h-[5px] w-[7px]" viewBox="0 0 7 5"><path d="M3.500 0 7 4H0z" fill="#a3a3a3"/></svg><div class="mt-[5px] h-[90px] w-[13px] bg-[#c1c1c1]"></div><svg class="mt-auto h-[5px] w-[7px]" viewBox="0 0 7 5"><path d="M0 0h7L3.500 4z" fill="#444"/></svg></div>
    </div>
    <div class="h-[26px] shrink-0 border-t border-[#bbb] bg-[#f3f3f3]"></div>
    <!-- Windows activation watermark -->
    <div class="pointer-events-none absolute right-[56px] bottom-[32px] w-[236px] font-['Segoe_UI','Open_Sans',sans-serif] whitespace-nowrap text-[#8c8c8c]/60"><div class="text-[19px] leading-6">Activate Windows</div><div class="text-[14px] leading-5">Go to Settings to activate Windows.</div></div>
  </aside>
</main>

<!-- Taskbar -->
<footer class="flex h-10 shrink-0 items-stretch bg-[#061216] font-['Segoe_UI','Open_Sans',sans-serif] text-white">
  <div class="flex [&>button]:flex [&>button]:w-[49px] [&>button]:items-center [&>button]:justify-center">
    <button aria-label="Start"><svg class="size-4" viewBox="0 0 16 16"><path d="M0 2.300 6.800 1.400V7.600H0zM7.700 1.200 16 0V7.600H7.700zM0 8.400h6.800v6.200L0 13.700zM7.700 8.400H16V16l-8.300-1.200z" fill="#fff"/></svg></button>
    <button aria-label="Cortana"><svg class="size-4" viewBox="0 0 16 16"><circle cx="8" cy="8" r="6.700" fill="none" stroke="#fff" stroke-width="2"/></svg></button>
    <button aria-label="Chrome" class="border-b-2 border-[#76b9ed] bg-[#3a4346]"><svg class="size-[22px]" viewBox="0 0 22 22"><circle cx="11" cy="11" r="11" fill="#fbcd14"/><path d="M1.500 5.500A11 11 0 0 0 10.500 22L15 13.500 11 11z" fill="#1d9e52"/><path d="M1.500 5.500A11 11 0 0 1 20.500 5.500H11A5.500 5.500 0 0 0 6 9.500l-.5 3z" fill="#e33b2e"/><circle cx="11" cy="11" r="5.200" fill="#f1f1f1"/><circle cx="11" cy="11" r="4.200" fill="#4285f4"/></svg></button>
    <button aria-label="File Explorer"><span class="flex h-full w-10 items-center justify-center border-b-2 border-[#76b9ed]"><svg class="h-[18px] w-[22px]" viewBox="0 0 22 18"><path d="M0 0h8l1.500 2H21.500v15H0z" fill="#f4c952"/><path d="M0 4h21.500v13H0z" fill="#fbe597"/><path d="M4 18v-7.500h14V18h-4v-4H8v4z" fill="#34b1e6"/></svg></span></button>
    <button aria-label="Settings"><svg class="size-[18px]" viewBox="0 0 18 18"><circle cx="9" cy="9" r="5.200" fill="none" stroke="#fff" stroke-width="2.800"/><path d="M9 0v3M9 15v3M0 9h3M15 9h3M2.600 2.600l2.200 2.200M13.200 13.200l2.200 2.200M2.600 15.400l2.200-2.200M13.200 4.800l2.200-2.200" stroke="#fff" stroke-width="3"/></svg></button>
    <button aria-label="Designer"><svg class="size-6" viewBox="0 0 24 24"><path d="M1 1v22l14-11M1 1l6 2M23 1l-5 7" stroke="#000" stroke-width="1.500" fill="none"/><path d="M7 1h16l-6 11H3l3-5z" fill="#8e0b0b"/><ellipse cx="13" cy="6.500" rx="4" ry="4.500" stroke="#000" stroke-width="2" fill="#8e0b0b"/></svg></button>
    <button aria-label="Teams"><svg class="h-[22px] w-6" viewBox="0 0 24 22"><circle cx="13" cy="4" r="3.600" fill="#7b83eb"/><circle cx="20.500" cy="5" r="2.500" fill="#5059c9"/><path d="M17 8.500h7v6a4 4 0 0 1-7 2.500z" fill="#5059c9"/><path d="M8 8.500h10V16a5.500 5.500 0 0 1-10 3z" fill="#7b83eb"/><rect y="5.500" width="12" height="12" rx="1" fill="#4b53bc"/><path d="M3 8.500h6M6 8.500v6.500" stroke="#fff" stroke-width="1.700"/></svg></button>
    <button aria-label="XAMPP"><svg class="size-6" viewBox="0 0 24 24"><rect width="24" height="24" rx="2" fill="#f0772a"/><path d="M1 1h22v2H1z" fill="#f7b07c"/><path d="M12 8.500C10.500 5 5 5 5 9c0 1.500.8 2.200 1.600 3C5.800 12.800 5 13.500 5 15c0 4 5.500 4 7 .5 1.500 3.500 7 3.500 7-.5 0-1.500-.8-2.200-1.600-3 .8-.8 1.600-1.500 1.600-3 0-4-5.500-4-7-.5zM9.500 12h5" fill="none" stroke="#fff" stroke-width="2.800" stroke-linejoin="round"/></svg></button>
    <button aria-label="Avast"><svg class="size-6" viewBox="0 0 24 24"><circle cx="12" cy="12" r="12" fill="#e8e4e3"/><path d="M15.500 9v8M15.500 12.500a3 3.500 0 1 0-6 0c0 3.500 4 4.500 6 1.500M15.500 17c4-3 2.500-10.500-3.500-10.500-5 0-7 6-4 10.500" fill="none" stroke="#e06a50" stroke-width="1.600"/></svg></button>
    <button aria-label="Snipping Tool"><svg class="size-6" viewBox="0 0 24 24"><ellipse cx="11" cy="12" rx="10" ry="6" fill="#888" transform="rotate(-15 11 12)"/><ellipse cx="12" cy="8.500" rx="11" ry="6" fill="#f6f6f6" stroke="#d23f3f" stroke-width="1.500" transform="rotate(-15 12 8.500)"/><path d="m7 6 10 8M14 3v11" stroke="#777"/><ellipse cx="15.500" cy="20" rx="2" ry="3" fill="none" stroke="#1d6fb5" stroke-width="1.700"/><ellipse cx="20" cy="16" rx="3" ry="2" fill="none" stroke="#1d6fb5" stroke-width="1.700"/></svg></button>
    <button aria-label="Excel"><span class="flex h-full w-10 items-center justify-center border-b-2 border-[#76b9ed]"><svg class="size-[22px]" viewBox="0 0 22 22"><path d="M12 3h9.500v16H12z" fill="#fff" stroke="#1f7244"/><path d="M14 6h7M14 9h7M14 12h7M14 15h7M17.500 4v14" stroke="#1f7244"/><path d="M0 2.500 13 0v22L0 19.500z" fill="#1f7244"/><path d="m3.500 7 5.500 8.500M9 7l-5.500 8.500" stroke="#fff" stroke-width="1.900"/></svg></span></button>
    <button aria-label="Notepad"><span class="flex h-full w-10 items-center justify-center border-b-2 border-[#76b9ed]"><svg class="size-[22px]" viewBox="0 0 22 22"><path d="m20 2 2 17-4 2z" fill="#a67c4a"/><path d="m8 1 12 1-1 20-9-2z" fill="#d8e6e8"/><path d="M7 1h12l-6 18-13-2z" fill="#58b3c6"/><path d="M7 1h12l-2 6L4 8z" fill="#b6dfe7"/></svg></span></button>
  </div>
  <div class="ml-auto flex items-center">
    <svg class="mr-2.5 h-2 w-3" viewBox="0 0 12 8"><path d="m.7 7 5.300-5.500L11.300 7" fill="none" stroke="#fff" stroke-width="1.300"/></svg>
    <svg class="mr-[11px] h-3 w-4" viewBox="0 0 16 12"><path d="M5.500 3.500h9v6h-9v-2M15.500 5v3" fill="none" stroke="#fff"/><path d="M7 5h6v3H7zM0 2h4v2.500L2.500 6H1.500L0 4.500z" fill="#fff"/><path d="M1 0v2M3 0v2M2 6v3.500h3" fill="none" stroke="#fff"/></svg>
    <svg class="mr-2 h-3 w-[13px]" viewBox="0 0 13 12"><g fill="none" stroke="#fff" stroke-width="1.200"><path d="M.8 12C1 6 6 1.300 13 1"/><path d="M4 12c.3-4 4-7.500 9-7.800"/><path d="M7 12c.3-2.500 3-4.600 6-4.800"/></g><circle cx="11" cy="10.500" r="1.500" fill="#fff"/></svg>
    <svg class="mr-[9px] h-3.5 w-[18px]" viewBox="0 0 18 14"><path d="M.7 5v4.500h2L7 13V1.500L2.700 5z" fill="none" stroke="#fff" stroke-width="1.200"/><path d="M9.500 5c1 1.300 1 3 0 4.300M11.700 3c2 2.500 2 6 0 8.500M14 1c3 3.500 3 9 0 12.500" fill="none" stroke="#fff" stroke-width="1.200"/></svg>
    <div class="w-6 text-center text-[11px] leading-[17px]">ENG<br>IN</div>
    <div class="ml-2 w-[60px] text-center text-[11px] leading-[17px] whitespace-nowrap">9:41 AM<br>6/28/2020</div>
    <svg class="mr-5 ml-[15px] size-4" viewBox="0 0 16 16"><path d="M.7 1.200h14.600v11.300H9.500v2.800L6.500 12.500H.7z" fill="none" stroke="#fff" stroke-width="1.300"/></svg>
    <i class="mr-1 h-full w-px bg-[#4f575a]"></i>
  </div>
</footer>
</body>
</html>
